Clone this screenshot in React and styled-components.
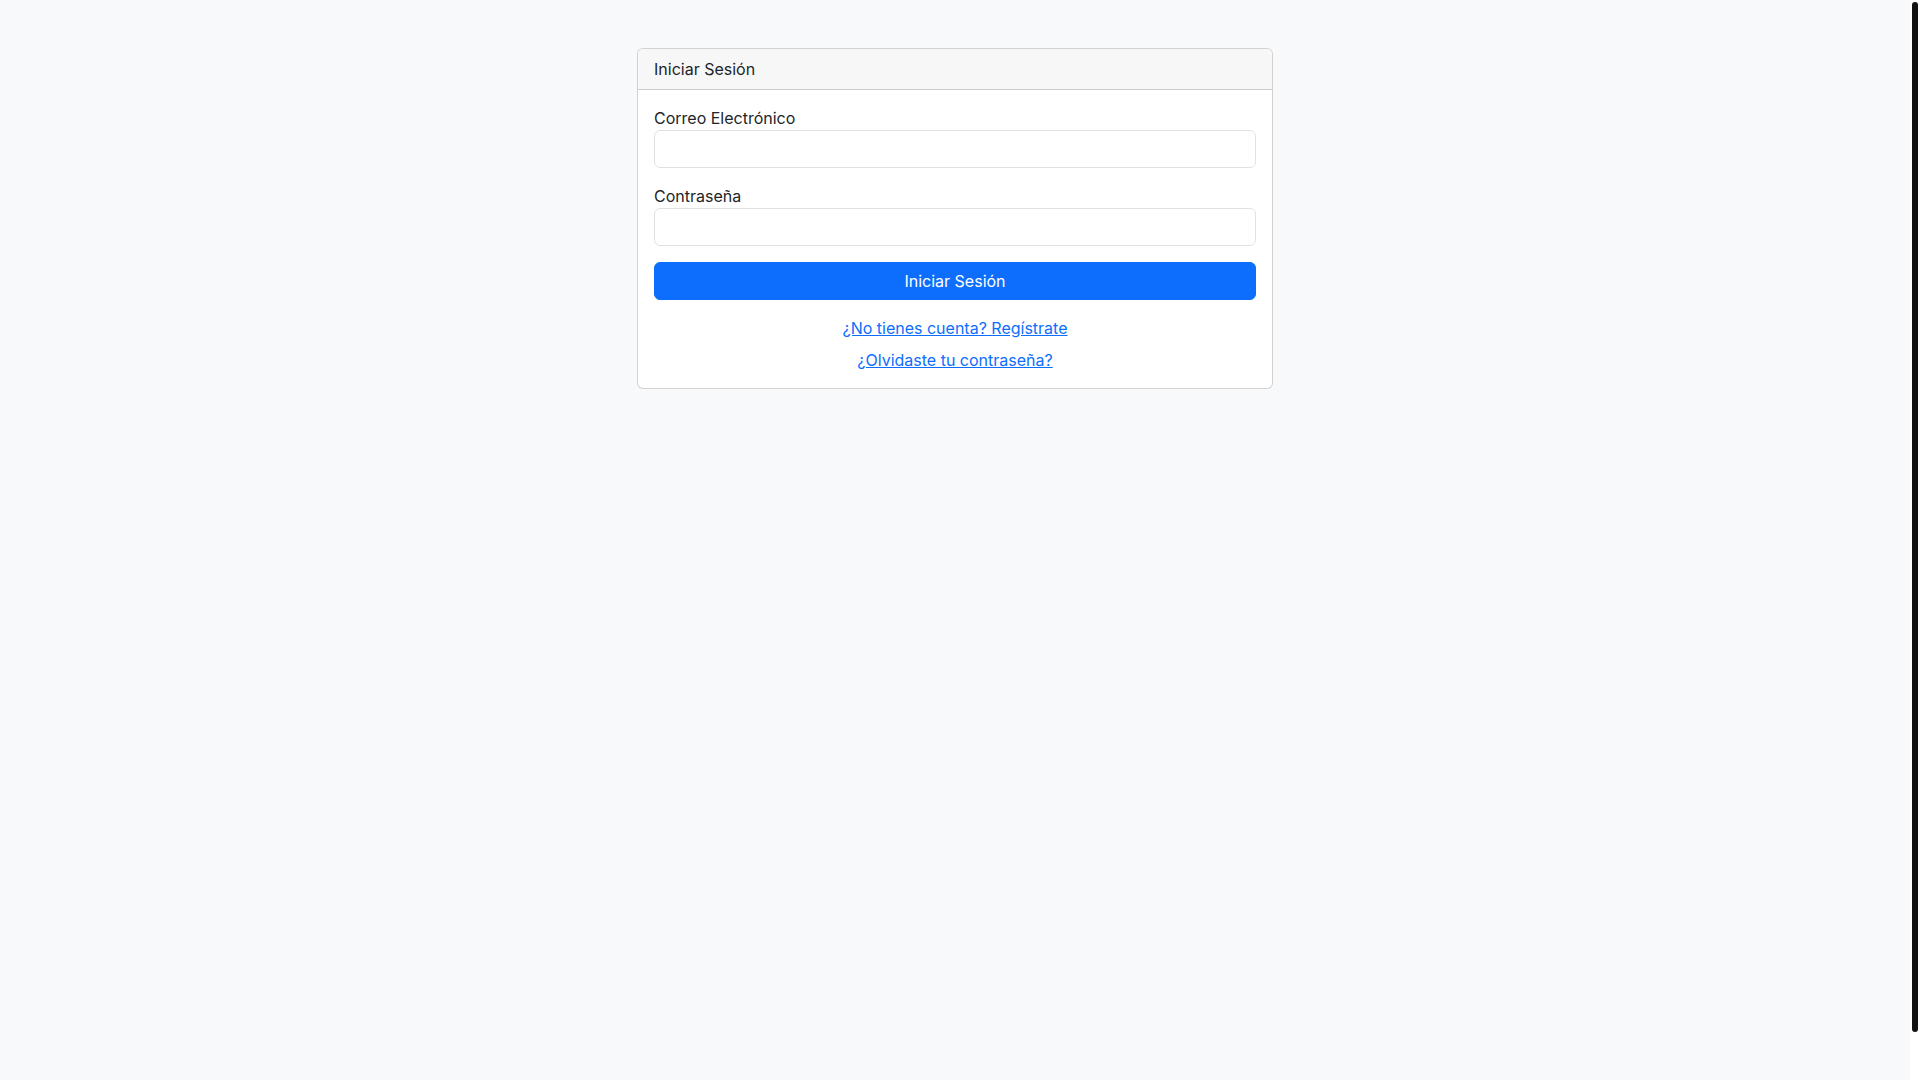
import React from 'react';
import styled, { createGlobalStyle } from 'styled-components';

const GlobalStyle = createGlobalStyle`
  html, body {
    margin: 0;
    padding: 0;
    overflow: hidden;
  }
  body {
    background: #f8f9fa;
    color: #212529;
    font-family: Inter, "Noto Sans", "Liberation Sans", sans-serif;
    font-size: 16px;
    line-height: 1.5;
  }
  *, *::before, *::after {
    box-sizing: border-box;
  }
`;

const Page = styled.main`
  height: 100vh;
  padding: 48px 10px 0 0;
  display: flex;
  justify-content: center;
  align-items: flex-start;
`;

// the window's scrollbar, drawn over the right edge
const ScrollTrack = styled.div`
  position: fixed;
  top: 0;
  right: 0;
  width: 10px;
  height: 100vh;
  padding: 2px;
  background: #ffffff;
`;

const ScrollThumb = styled.div`
  width: 6px;
  height: ${({ $ratio }) => `${$ratio * 100}%`};
  background: #121212;
  border-radius: 3px;
`;

const Card = styled.section`
  width: 636px;
  background: #ffffff;
  border: 1px solid rgba(0, 0, 0, 0.175);
  border-radius: 6px;
  overflow: hidden;
`;

const CardHeader = styled.header`
  padding: 8px 16px;
  background: #f7f7f7;
  border-bottom: 1px solid rgba(0, 0, 0, 0.175);
`;

const CardBody = styled.div`
  padding: 16px;
`;

const Field = styled.div`
  margin-bottom: 16px;
`;

const Label = styled.label`
  display: block;
`;

const Input = styled.input`
  display: block;
  width: 100%;
  height: 38px;
  padding: 6px 12px;
  font: inherit;
  color: #212529;
  background: #ffffff;
  border: 1px solid #dee2e6;
  border-radius: 6px;
  outline: none;
`;

const SubmitButton = styled.button`
  display: block;
  width: 100%;
  height: 38px;
  padding: 6px 12px;
  font: inherit;
  color: #ffffff;
  background: #0d6efd;
  border: 1px solid #0d6efd;
  border-radius: 6px;
  cursor: pointer;
`;

const Links = styled.div`
  margin-top: 16px;
  text-align: center;
`;

const LinkLine = styled.p`
  margin: 0 0 8px;

  &:last-child {
    margin-bottom: 0;
  }
`;

const Link = styled.a`
  color: #0d6efd;
  text-decoration: underline;
`;

const App = () => (
  <>
    <GlobalStyle />
    <Page>
      <Card>
        <CardHeader>Iniciar Sesión</CardHeader>
        <CardBody>
          <form onSubmit={(e) => e.preventDefault()}>
            <Field>
              <Label htmlFor="email">Correo Electrónico</Label>
              <Input id="email" type="email" />
            </Field>
            <Field>
              <Label htmlFor="password">Contraseña</Label>
              <Input id="password" type="password" />
            </Field>
            <SubmitButton type="submit">Iniciar Sesión</SubmitButton>
          </form>
          <Links>
            <LinkLine>
              <Link href="#">¿No tienes cuenta? Regístrate</Link>
            </LinkLine>
            <LinkLine>
              <Link href="#">¿Olvidaste tu contraseña?</Link>
            </LinkLine>
          </Links>
        </CardBody>
      </Card>
    </Page>
    <ScrollTrack>
      <ScrollThumb $ratio={0.957} />
    </ScrollTrack>
  </>
);

export default App;
